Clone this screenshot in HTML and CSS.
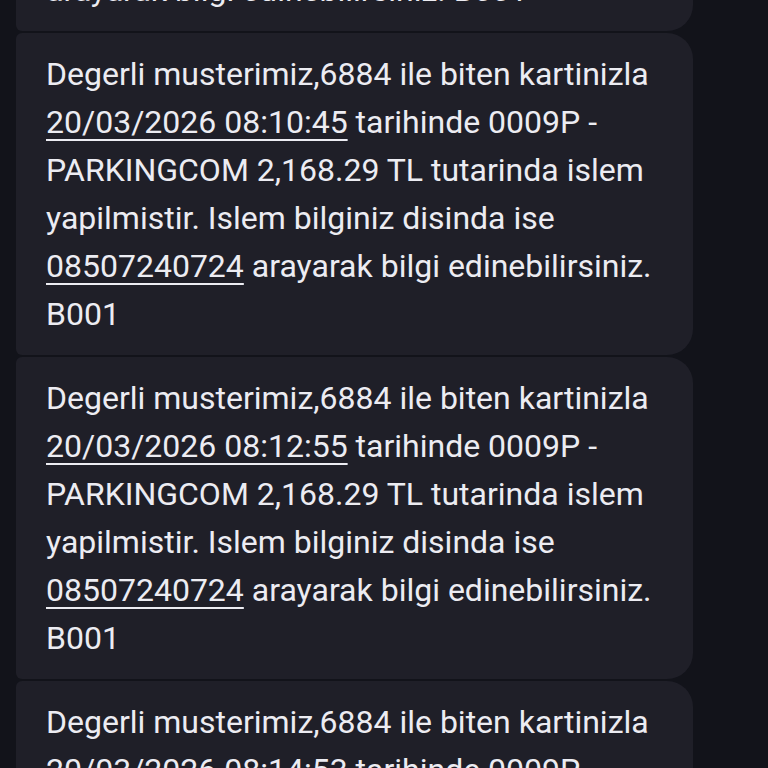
FILE: index.html
```html
<!DOCTYPE html>
<html lang="tr">
<head>
<meta charset="utf-8">
<title>Mesajlar</title>
<link rel="stylesheet" href="styles.css">
</head>
<body>
<div class="viewport">
  <div class="thread">
    <div class="bubble">
      <p class="msg">Degerli musterimiz,6884 ile biten kartinizla <span class="link">20/03/2026 08:08:31</span> tarihinde 0009P - PARKINGCOM 2,168.29 TL tutarinda islem yapilmistir. Islem bilginiz disinda ise <span class="link">08507240724</span><br>arayarak bilgi edinebilirsiniz. B001</p>
    </div>
    <div class="bubble">
      <p class="msg">Degerli musterimiz,6884 ile biten kartinizla <span class="link">20/03/2026 08:10:45</span> tarihinde 0009P - PARKINGCOM 2,168.29 TL tutarinda islem yapilmistir. Islem bilginiz disinda ise <span class="link">08507240724</span> arayarak bilgi edinebilirsiniz. B001</p>
    </div>
    <div class="bubble">
      <p class="msg">Degerli musterimiz,6884 ile biten kartinizla <span class="link">20/03/2026 08:12:55</span> tarihinde 0009P - PARKINGCOM 2,168.29 TL tutarinda islem yapilmistir. Islem bilginiz disinda ise <span class="link">08507240724</span> arayarak bilgi edinebilirsiniz. B001</p>
    </div>
    <div class="bubble">
      <p class="msg">Degerli musterimiz,6884 ile biten kartinizla <span class="link">20/03/2026 08:14:53</span> tarihinde 0009P - PARKINGCOM 2,168.29 TL tutarinda islem yapilmistir. Islem bilginiz disinda ise <span class="link">08507240724</span> arayarak bilgi edinebilirsiniz. B001</p>
    </div>
  </div>
</div>
</body>
</html>
```
FILE: styles.css
```css
html, body {
  margin: 0;
  padding: 0;
  background: #12131a;
}
.viewport {
  width: 768px;
  height: 768px;
  overflow: hidden;
  background: #12131a;
}
.thread {
  display: flex;
  flex-direction: column;
  gap: 2px;
  padding: 0 75px 0 16px;
  margin-top: -291px;
}
.bubble {
  background: #1f1f28;
  border-radius: 6px 26px 26px 6px;
  padding: 17px 28px 17px 30px;
}
.msg {
  margin: 0;
  font-family: Roboto, "Noto Sans", sans-serif;
  font-size: 32px;
  line-height: 48px;
  color: #ececf2;
}
.link {
  text-decoration: underline;
  text-decoration-thickness: 2px;
  text-underline-offset: 6px;
}
```
